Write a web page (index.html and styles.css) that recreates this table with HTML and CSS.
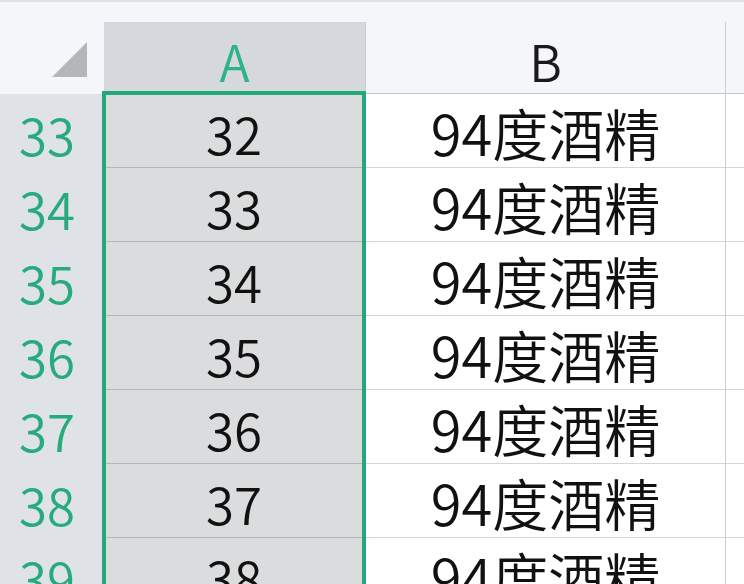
FILE: index.html
```html
<!DOCTYPE html>
<html lang="zh">
<head>
<meta charset="utf-8">
<link rel="stylesheet" href="styles.css">
</head>
<body>
<div class="sheet">
  <div class="topbar"></div>
  <div class="grid">
    <div class="corner"><span class="tri"></span></div>
    <div class="colhead cur">A</div>
    <div class="colhead">B</div>
    <div class="colhead rest"></div>

    <div class="rowhead">33</div><div class="cell a">32</div><div class="cell b">94度酒精</div><div class="cell r"></div>
    <div class="rowhead">34</div><div class="cell a">33</div><div class="cell b">94度酒精</div><div class="cell r"></div>
    <div class="rowhead">35</div><div class="cell a">34</div><div class="cell b">94度酒精</div><div class="cell r"></div>
    <div class="rowhead">36</div><div class="cell a">35</div><div class="cell b">94度酒精</div><div class="cell r"></div>
    <div class="rowhead">37</div><div class="cell a">36</div><div class="cell b">94度酒精</div><div class="cell r"></div>
    <div class="rowhead">38</div><div class="cell a">37</div><div class="cell b">94度酒精</div><div class="cell r"></div>
    <div class="rowhead">39</div><div class="cell a">38</div><div class="cell b">94度酒精</div><div class="cell r"></div>
  </div>
  <div class="selection"></div>
</div>
</body>
</html>
```
FILE: styles.css
```css
html, body {
  margin: 0;
  padding: 0;
  background: #f4f6f9;
  overflow: hidden;
}
.sheet {
  position: relative;
  width: 744px;
  height: 584px;
  overflow: hidden;
  font-family: "Noto Sans CJK SC", "Noto Sans", sans-serif;
  font-weight: 350;
}
.topbar {
  height: 22px;
  box-sizing: border-box;
  border-top: 2px solid #dfe1e4;
  background: #f4f6f9;
}
.grid {
  display: grid;
  grid-template-columns: 102px 264px 360px 1fr;
  grid-template-rows: 72px repeat(7, 74px);
}
.corner {
  background: #f4f6f9;
  position: relative;
  margin-top: -20px;
}
.tri {
  position: absolute;
  left: 52px;
  top: 40px;
  width: 0;
  height: 0;
  border-style: solid;
  border-width: 0 0 35px 35px;
  border-color: transparent transparent #b5b6b8 transparent;
}
.colhead {
  box-sizing: border-box;
  display: flex;
  align-items: center;
  justify-content: center;
  font-size: 50px;
  color: #1a1a1a;
  background: #f4f6f9;
  border-right: 1px solid #c9ccd1;
  border-bottom: 1px solid #c3c6cb;
  padding-top: 4px;
}
.colhead.cur {
  background: #d5d8dc;
  color: #2db386;
  margin-left: 2px;
}
.colhead.rest {
  border-right: none;
}
.rowhead {
  box-sizing: border-box;
  background: #dfe2e6;
  color: #27aa7c;
  font-size: 51px;
  display: flex;
  align-items: center;
  justify-content: center;
  padding-right: 8px;
  padding-top: 6px;
}
.cell {
  box-sizing: border-box;
  display: flex;
  align-items: center;
  justify-content: center;
  font-size: 51px;
  color: #111;
  padding-top: 4px;
}
.cell.a {
  background: #dbdcde;
  border-bottom: 1px solid #b4b6b9;
}
.cell.b {
  background: #ffffff;
  border-bottom: 1px solid #d2d5da;
  border-right: 1px solid #c9ccd1;
  font-size: 56px;
  padding-top: 2px;
}
.cell.r {
  background: #ffffff;
  border-bottom: 1px solid #d2d5da;
}
.selection {
  position: absolute;
  left: 102px;
  top: 91px;
  width: 264px;
  height: 520px;
  box-sizing: border-box;
  border: 4px solid #22a87a;
}
```
